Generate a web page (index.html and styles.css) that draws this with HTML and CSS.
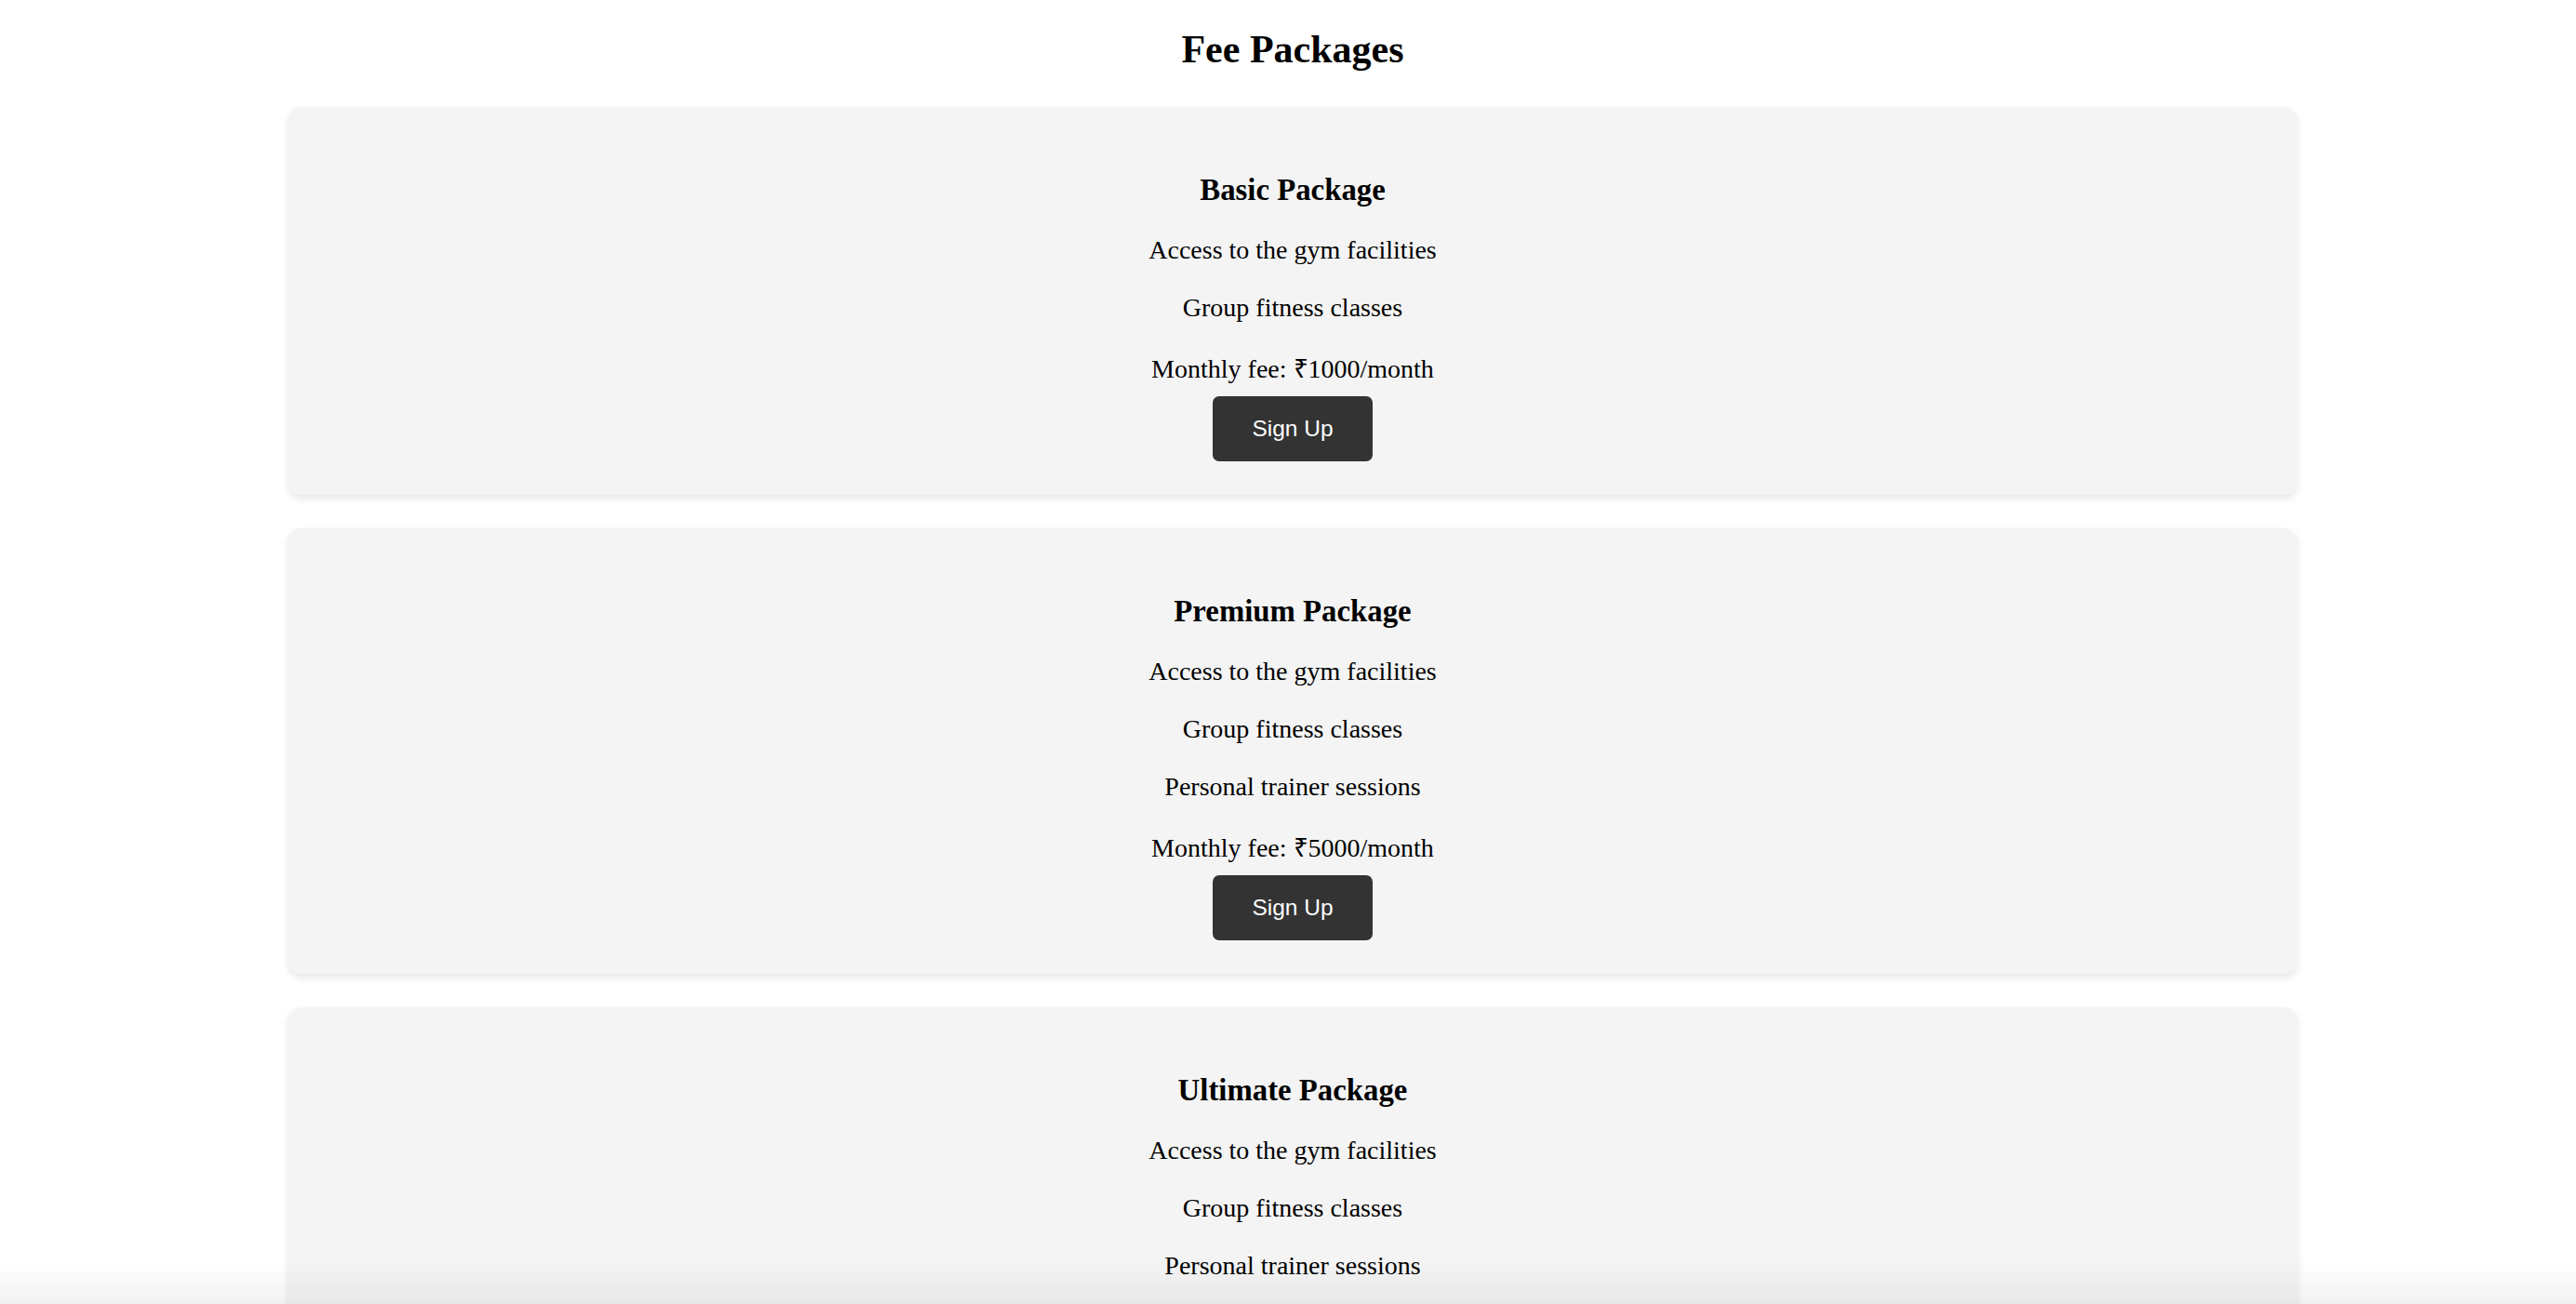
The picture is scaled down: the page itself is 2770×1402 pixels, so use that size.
FILE: index.html
```html
<!DOCTYPE html>
<html lang="en">
<head>
<meta charset="utf-8">
<title>Fee Packages</title>
<link rel="stylesheet" href="styles.css">
</head>
<body>
<main class="page">
  <h2 class="title">Fee Packages</h2>

  <section class="card">
    <h3 class="card-title">Basic Package</h3>
    <p class="feature">Access to the gym facilities</p>
    <p class="feature">Group fitness classes</p>
    <p class="price">Monthly fee: ₹1000/month</p>
    <button class="btn">Sign Up</button>
  </section>

  <section class="card">
    <h3 class="card-title">Premium Package</h3>
    <p class="feature">Access to the gym facilities</p>
    <p class="feature">Group fitness classes</p>
    <p class="feature">Personal trainer sessions</p>
    <p class="price">Monthly fee: ₹5000/month</p>
    <button class="btn">Sign Up</button>
  </section>

  <section class="card">
    <h3 class="card-title">Ultimate Package</h3>
    <p class="feature">Access to the gym facilities</p>
    <p class="feature">Group fitness classes</p>
    <p class="feature">Personal trainer sessions</p>
    <p class="feature">Nutrition consultation</p>
    <p class="price">Monthly fee: ₹8000/month</p>
    <button class="btn">Sign Up</button>
  </section>
</main>
<div class="bottom-fade"></div>
</body>
</html>
```

FILE: styles.css
```css
html, body {
  margin: 0;
  padding: 0;
  background: #ffffff;
}

body {
  font-family: "Liberation Serif", "Times New Roman", serif;
  font-size: 28px;
  color: #000000;
}

.page {
  display: flex;
  flex-direction: column;
  padding: 0 300px 40px 310px;
  text-align: center;
}

.title {
  font-size: 42px;
  font-weight: bold;
  margin: 29px 0 38px 0;
  line-height: normal;
}

.card {
  background: #f4f4f4;
  border-radius: 14px;
  box-shadow: 0 4px 9px rgba(0, 0, 0, 0.1);
  padding: 35px 35px 36px 35px;
  margin-bottom: 36px;
  display: flex;
  flex-direction: column;
  align-items: center;
}

.card-title {
  font-size: 32.8px;
  font-weight: bold;
  margin: 36px 0 29px 0;
  line-height: normal;
}

.feature {
  margin: 0 0 28px 0;
  line-height: 34px;
}

.price {
  margin: 4px 0 12px 0;
  line-height: 34px;
}

.btn {
  font-family: "Liberation Sans", Arial, sans-serif;
  font-size: 24.5px;
  color: #ffffff;
  background: #333333;
  border: none;
  border-radius: 7px;
  padding: 21px 42px;
  line-height: normal;
  cursor: pointer;
}

.bottom-fade {
  position: fixed;
  left: 0;
  right: 0;
  bottom: 0;
  height: 46px;
  background: linear-gradient(to bottom, rgba(0, 0, 0, 0), rgba(0, 0, 0, 0.05));
  pointer-events: none;
}
```
